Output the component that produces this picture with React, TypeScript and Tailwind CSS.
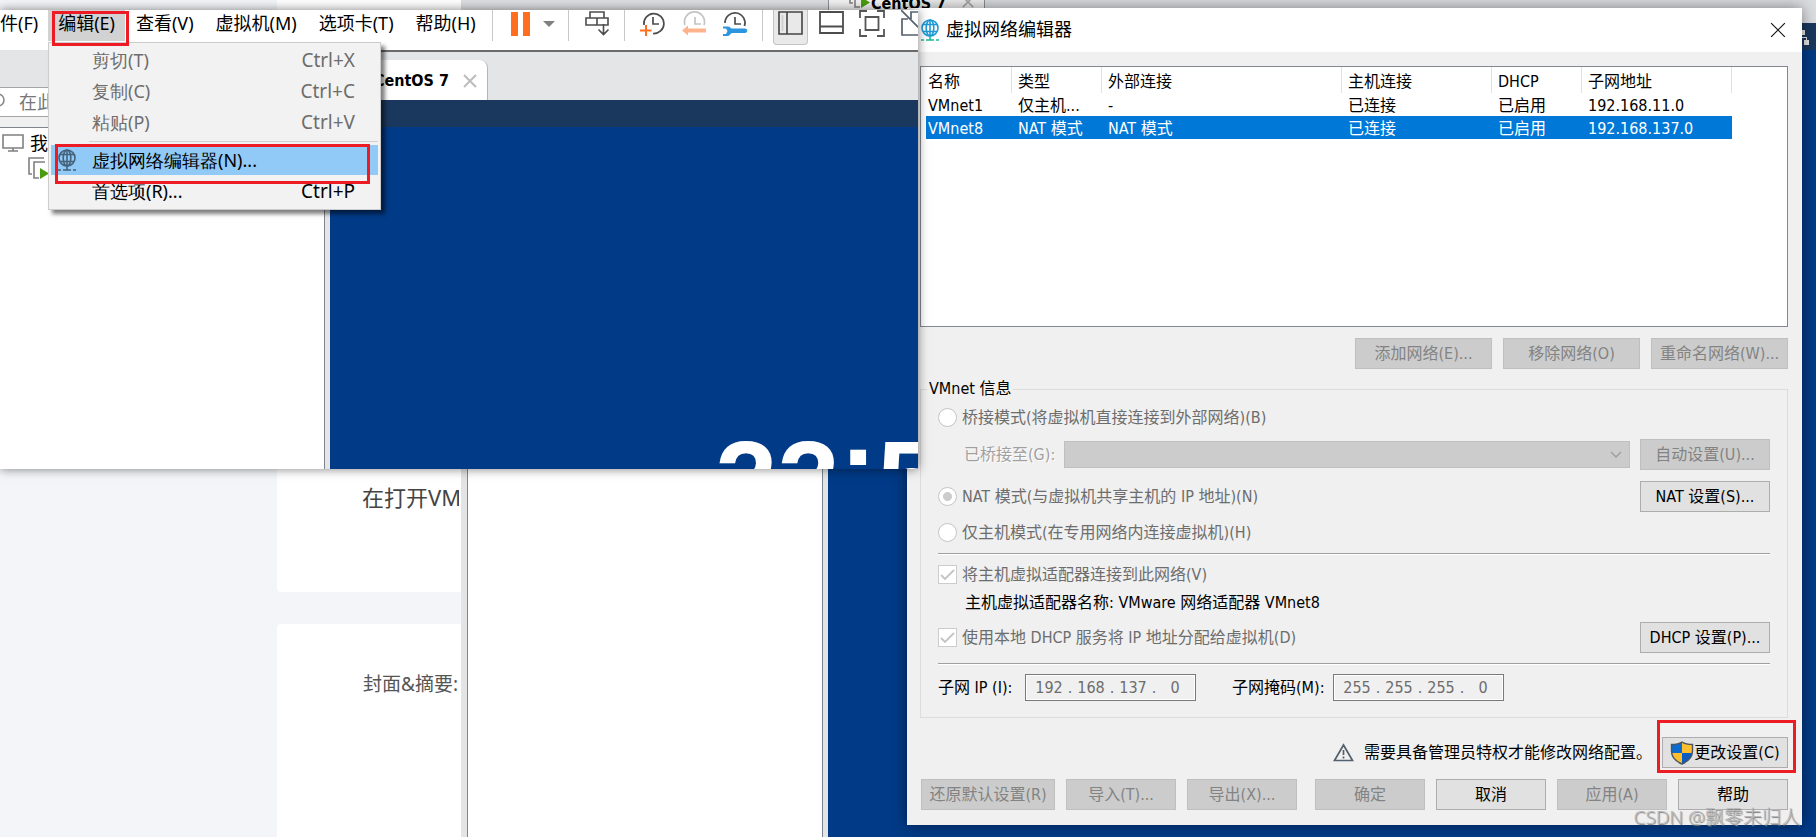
import type { ReactNode } from 'react'

const UI_FONT = "font-['DejaVu_Sans_Condensed','Noto_Sans_CJK_SC',sans-serif]"
const MENU_FONT = "font-['Noto_Sans','Noto_Sans_CJK_SC',sans-serif]"

const menus = ['文件(F)', '编辑(E)', '查看(V)', '虚拟机(M)', '选项卡(T)', '帮助(H)']

const networks = [
  { name: 'VMnet1', type: '仅主机...', external: '-', host: '已连接', dhcp: '已启用', subnet: '192.168.11.0' },
  { name: 'VMnet8', type: 'NAT 模式', external: 'NAT 模式', host: '已连接', dhcp: '已启用', subnet: '192.168.137.0' },
]

function Globe({ color, base }: { color: string; base: string }) {
  return (
    <svg width="20" height="23" viewBox="0 0 20 23" fill="none" stroke={color} strokeWidth="1.6" className="shrink-0">
      <circle cx="10" cy="9" r="8" />
      <ellipse cx="10" cy="9" rx="3.8" ry="8" />
      <path d="M2.8 5.5h14.4M2.8 12.5h14.4M10 1v16" />
      <path d="M10 17v4M6 21h8M1 21h3M16 21h3" stroke={base} />
    </svg>
  )
}

function Clock({ stroke, children }: { stroke: string; children: ReactNode }) {
  return (
    <svg width="26" height="26" viewBox="0 0 26 26" fill="none" stroke={stroke} strokeWidth="1.7">
      {children}
    </svg>
  )
}

function Cross({ size, stroke, width }: { size: number; stroke: string; width: number }) {
  return (
    <svg width={size} height={size} viewBox="0 0 14 14" stroke={stroke} strokeWidth={width}>
      <path d="M1 1l12 12M13 1L1 13" />
    </svg>
  )
}

function VmIcon() {
  return (
    <svg width="22" height="23" viewBox="0 0 22 23" fill="none" stroke="#808080" strokeWidth="1.6">
      <path d="M4 17H1V1h15M17 5H6v16h5" />
      <path d="M12 11l9 5.500l-9 5.500z" fill="#4a9b0c" stroke="none" />
    </svg>
  )
}

function Toolbar() {
  const line = 'h-[31px] w-px bg-[#c8c8c8]'
  return (
    <div className="flex shrink-0 items-start">
      <button aria-label="暂停" className="ml-[18px] mt-0.5 w-5">
        <svg width="20" height="24" fill="#ff6d1f">
          <path d="M0 0h7v24H0zM12 0h7v24h-7z" />
        </svg>
      </button>
      <button aria-label="电源选项" className="ml-3 mt-[11px] w-3">
        <svg width="12" height="7" fill="#808080">
          <path d="M0 0h12L6 6z" />
        </svg>
      </button>
      <span className={`ml-[13px] ${line}`} />
      <button aria-label="发送 Ctrl+Alt+Del" className="ml-4 w-6">
        <svg width="25" height="26" viewBox="0 0 25 26" fill="none" stroke="#4d4d4d" strokeWidth="1.6">
          <path d="M5 2h14v6H5zM1 8h11v7H1zM12 8h11v7H12zM18.500 14v10M13.500 19.500l5 5l5-5" />
        </svg>
      </button>
      <span className={`ml-[15px] ${line}`} />
      <button aria-label="拍摄快照" className="ml-[15px] w-6">
        <Clock stroke="#4d4d4d">
          <path d="M4 15A10 10 0 1 1 13 23.500M13 7v7h6" />
          <path d="M6 15v11M0 20.500h11.500" stroke="#ff6d1f" strokeWidth="2" />
        </Clock>
      </button>
      <button aria-label="恢复快照" className="ml-[18px] w-6">
        <Clock stroke="#c4c4c4">
          <path d="M3 15A10 10 0 1 1 22 15M13 7v7h6" />
          <path d="M0 20.500l6-5v3h18v4H6v3z" fill="#ffb38c" stroke="none" />
        </Clock>
      </button>
      <button aria-label="管理快照" className="ml-4 w-[26px]">
        <Clock stroke="#4d4d4d">
          <path d="M3 13A10 10 0 1 1 22.500 16M13 7v7h6" />
          <path
            d="M1 16.500h5c2 0 2.500 2 4 2h13c3 0 3 4.500 0 4.500H10c-1.500 0-2 3-4 3H1v-2h3l1.500-3L4 18.500H1z"
            fill="#2b96de"
            stroke="none"
          />
        </Clock>
      </button>
      <span className={`ml-3.5 ${line}`} />
      <button
        aria-label="显示库"
        className="ml-2.5 flex h-[35px] w-[35px] justify-center rounded-b border border-t-0 border-[#c4c4c4] bg-[#e9e9e9] pt-px"
      >
        <svg width="25" height="25" fill="none" stroke="#444" strokeWidth="1.6">
          <path d="M1 1h23v22H1zM9 1v22" />
          <path d="M4.500 4v16" stroke="#ccc" />
        </svg>
      </button>
      <button aria-label="显示缩略图" className="ml-[11px] mt-px w-[25px]">
        <svg width="25" height="25" fill="none" stroke="#4d4d4d" strokeWidth="1.8">
          <path d="M1 1h23v21H1zM1 15.500h23" />
        </svg>
      </button>
      <button aria-label="全屏" className="ml-3.5 w-7">
        <svg width="28" height="28" fill="none" stroke="#555" strokeWidth="1.8">
          <path d="M2 8V1h7M19 1h7v7M26 19v7h-7M9 26H2v-7M7.500 7h13v13h-13z" />
        </svg>
      </button>
      <button aria-label="Unity" className="ml-[15px] w-[26px]">
        <svg width="26" height="28" fill="none" stroke="#55626e" strokeWidth="1.7">
          <path d="M10 9V2h15M7 9H1v16h22V19M0 0l19 19" />
        </svg>
      </button>
    </div>
  )
}

function MenuItem({ label, keys, disabled }: { label: string; keys?: string; disabled?: boolean }) {
  return (
    <button
      role="menuitem"
      disabled={disabled}
      className="flex h-[31px] w-full items-center justify-between pl-[42px] pr-6 disabled:text-[#6d6d6d]"
    >
      <span>{label}</span>
      <span className="text-[19px]">{keys}</span>
    </button>
  )
}

function EditMenu() {
  return (
    <div
      role="menu"
      className="absolute left-12 top-8 h-[168px] w-[333px] border border-[#ccc] bg-[#f2f2f2] px-px pt-px text-lg leading-6 shadow-[4px_4px_4px_rgba(0,0,0,0.5)]"
    >
      <MenuItem label="剪切(T)" keys="Ctrl+X" disabled />
      <MenuItem label="复制(C)" keys="Ctrl+C" disabled />
      <MenuItem label="粘贴(P)" keys="Ctrl+V" disabled />
      <div className="mb-[3px] ml-[39px] mr-px mt-1 h-px bg-[#d0d0d0]" />
      <button role="menuitem" className="mx-px flex h-[30px] w-[327px] items-center gap-[15px] bg-[#91c9f7] pl-[6px]">
        <Globe color="#44627a" base="#44627a" />
        <span>虚拟网络编辑器(N)...</span>
      </button>
      <MenuItem label="首选项(R)..." keys="Ctrl+P" />
    </div>
  )
}

function VmwareWindow() {
  return (
    <section className="absolute left-0 top-2.5 h-[459px] w-[918px] shadow-[0_0_10px_rgba(0,0,0,0.5)]">
      <div className={`flex h-full flex-col overflow-hidden bg-white ${MENU_FONT}`}>
        <div className="flex h-10 shrink-0">
          <nav className="-ml-7 flex h-[31px] w-[521px] shrink-0 border-r border-[#c8c8c8] text-lg leading-[26px]">
            {menus.map((m, i) => (
              <button
                key={m}
                className={`shrink-0 whitespace-nowrap pb-1.5 ${i < 2 ? 'px-2.5' : 'px-[11px]'} ${
                  m === '编辑(E)' ? 'bg-[#d2d2d2]' : ''
                }`}
              >
                {m}
              </button>
            ))}
          </nav>
          <Toolbar />
        </div>
        <div className="flex min-h-0 flex-1">
          <aside className="flex w-[325px] shrink-0 flex-col border-r border-[#80858c]">
            <div className="h-[37px] bg-[#e4e5e7]" />
            <label className="flex h-[30px] items-center gap-3.5 border-y border-[#a5a5a5] text-lg text-[#777]">
              <svg width="5" height="18" fill="none" stroke="#888" strokeWidth="1.6">
                <circle cx="-2" cy="7" r="6" />
              </svg>
              <input className="w-40 outline-none placeholder:text-[#777]" placeholder="在此处键入内容" />
            </label>
            <div className="h-[11px] border-b border-[#80858c] bg-[#f0f0f0]" />
            <div className="flex items-center gap-1.5 pl-0.5 pt-0.5 text-lg leading-[26px]">
              <svg width="22" height="18" fill="none" stroke="#808080" strokeWidth="1.6">
                <path d="M1 1h20v13H1zM11 14v3M6 17h10" />
              </svg>
              我的计算机
            </div>
            <div className="pl-7 pt-px">
              <VmIcon />
            </div>
          </aside>
          <div className="w-[5px] shrink-0 bg-[#e4e5e7]" />
          <main className="flex min-w-0 flex-1 flex-col">
            <div className="-ml-[5px] flex h-[50px] shrink-0 items-end border-t-2 border-[#6b6b6b] bg-[#e4e5e7]">
              <button
                className={`flex h-10 w-[163px] items-center justify-end gap-3.5 rounded-tr-lg border-r border-[#b5b5b5] bg-white pr-2.5 pt-0.5 text-base font-bold ${UI_FONT}`}
              >
                CentOS 7
                <Cross size={14} stroke="#bdbdbd" width={2} />
              </button>
            </div>
            <div className="h-[27px] shrink-0 bg-[#1a385e]" />
            <div className="flex-1 overflow-hidden bg-[#013a86] pl-[385px] pt-[299px]">
              <div className="flex h-0 items-start whitespace-nowrap font-['Liberation_Sans',sans-serif] text-[112px] font-bold leading-[110px] text-white">
                <span>22</span>
                <span className="leading-[84px]">:</span>
                <span>57</span>
              </div>
            </div>
          </main>
        </div>
      </div>
      <EditMenu />
      <div className="pointer-events-none absolute left-[52px] top-px h-[35px] w-[77px] border-3 border-[#ed1c24]" />
      <div className="pointer-events-none absolute left-[55px] top-[134px] h-10 w-[315px] border-3 border-[#ed1c24]" />
    </section>
  )
}

function DialogButton({ children, width, disabled }: { children: ReactNode; width: string; disabled?: boolean }) {
  return (
    <button
      disabled={disabled}
      className={`flex h-[31px] shrink-0 items-center justify-center whitespace-nowrap border border-[#adadad] bg-[#e1e1e1] pt-px disabled:border-[#bfbfbf] disabled:bg-[#ccc] disabled:text-[#838383] ${width}`}
    >
      {children}
    </button>
  )
}

function RadioRow({ label, checked }: { label: string; checked?: boolean }) {
  return (
    <label className="flex items-center gap-[5px] text-[#6d6d6d]">
      <input
        type="radio"
        name="mode"
        disabled
        defaultChecked={checked}
        className="h-[19px] w-[19px] appearance-none rounded-full border border-[#c4c4c4] bg-white checked:bg-[radial-gradient(circle,#ccc_4px,#fff_5px)]"
      />
      {label}
    </label>
  )
}

function CheckRow({ label }: { label: string }) {
  return (
    <label className="flex items-center gap-[5px] text-[#6d6d6d]">
      <span className="grid h-[19px] w-[19px] place-items-center">
        <input
          type="checkbox"
          disabled
          defaultChecked
          className="col-start-1 row-start-1 h-[19px] w-[19px] appearance-none border border-[#ccc] bg-white"
        />
        <svg width="15" height="12" fill="none" stroke="#c4c4c4" strokeWidth="1.8" className="col-start-1 row-start-1">
          <path d="M1 6l4 4l9-9" />
        </svg>
      </span>
      {label}
    </label>
  )
}

function IpField({ label, parts }: { label: string; parts: string[] }) {
  return (
    <div
      role="group"
      aria-label={label}
      className="flex h-[27px] w-[171px] items-center border border-[#7a7a7a] pl-1.5 text-[#6d6d6d] shadow-[inset_0_0_0_1px_#fff]"
    >
      {parts.map((p, i) => (
        <span key={i} className="flex">
          {i > 0 && <span className="w-2 text-center">.</span>}
          <input aria-label={`${label} ${i + 1}`} disabled defaultValue={p} className="w-[34px] text-center" />
        </span>
      ))}
    </div>
  )
}

function Divider() {
  return <hr className="h-0.5 border-t border-b border-t-[#a0a0a0] border-b-white" />
}

function NetworkTable() {
  const head = 'h-[26px] border-r border-[#e0e0e0] pl-[6px] pt-[3px] text-left font-normal'
  const cell = 'pl-[6px] pt-0.5'
  return (
    <div className="h-[261px] border border-[#828790] bg-white pl-[5px]">
      <table className="w-[806px] table-fixed border-separate border-spacing-0 leading-5">
        <thead>
          <tr>
            <th className="h-[26px] w-[86px] border-r border-[#e0e0e0] pl-0.5 pt-[3px] text-left font-normal">名称</th>
            <th className={`w-[90px] ${head}`}>类型</th>
            <th className={`w-[240px] ${head}`}>外部连接</th>
            <th className={`w-[150px] ${head}`}>主机连接</th>
            <th className={`w-[90px] ${head}`}>DHCP</th>
            <th className={`w-[150px] ${head}`}>子网地址</th>
          </tr>
        </thead>
        <tbody>
          {networks.map(n => (
            <tr key={n.name} className={n.name === 'VMnet8' ? 'bg-[#0078d7] text-white' : ''}>
              <td className="h-[23px] pl-0.5 pt-0.5">{n.name}</td>
              <td className={`whitespace-nowrap ${cell}`}>{n.type}</td>
              <td className={cell}>{n.external}</td>
              <td className={cell}>{n.host}</td>
              <td className={cell}>{n.dhcp}</td>
              <td className={cell}>{n.subnet}</td>
            </tr>
          ))}
        </tbody>
      </table>
    </div>
  )
}

function NetworkEditor() {
  return (
    <section
      role="dialog"
      aria-label="虚拟网络编辑器"
      className={`absolute left-[907px] right-3.5 top-2 bg-[#f0f0f0] text-base leading-[18px] shadow-[0_0_14px_rgba(0,0,0,0.45)] ${UI_FONT}`}
    >
      <header className="flex h-11 items-center bg-white pl-[13px] pr-4">
        <Globe color="#1f9ad6" base="#1abc9c" />
        <h1 className={`ml-1.5 flex-1 pb-0.5 text-lg leading-6 ${MENU_FONT}`}>虚拟网络编辑器</h1>
        <button aria-label="关闭">
          <Cross size={16} stroke="#111" width={1} />
        </button>
      </header>

      <div className="pb-[15px] pl-[13px] pr-3.5 pt-3.5">
        <NetworkTable />

        <div className="mt-[11px] flex justify-end gap-[11px]">
          <DialogButton width="w-[137px]" disabled>添加网络(E)...</DialogButton>
          <DialogButton width="w-[137px]" disabled>移除网络(O)</DialogButton>
          <DialogButton width="w-[137px]" disabled>重命名网络(W)...</DialogButton>
        </div>

        <fieldset className="mt-[11px] border border-[#dcdcdc] px-[17px] pb-4">
          <legend className="-ml-[11px] px-0.5">VMnet 信息</legend>
          <div className="mt-1 flex h-[31px] items-center">
            <RadioRow label="桥接模式(将虚拟机直接连接到外部网络)(B)" />
          </div>
          <div className="mt-1.5 flex h-[31px] items-center">
            <label
              htmlFor="bridge"
              className="ml-[26px] w-[100px] shrink-0 whitespace-nowrap text-[#a0a0a0] [text-shadow:1px_1px_0_#fff]"
            >
              已桥接至(G):
            </label>
            <div className="grid min-w-0 flex-1 items-center">
              <select
                id="bridge"
                disabled
                className="col-start-1 row-start-1 h-[27px] w-full appearance-none border border-[#bfbfbf] bg-[#ccc]"
              />
              <svg width="12" height="7" fill="none" stroke="#a0a0a0" strokeWidth="1.5" className="col-start-1 row-start-1 mr-2 justify-self-end">
                <path d="M1 1l5 5l5-5" />
              </svg>
            </div>
            <span className="w-2.5" />
            <DialogButton width="w-[130px]" disabled>自动设置(U)...</DialogButton>
          </div>
          <div className="mt-[11px] flex h-[31px] items-center justify-between">
            <RadioRow label="NAT 模式(与虚拟机共享主机的 IP 地址)(N)" checked />
            <DialogButton width="w-[130px]">NAT 设置(S)...</DialogButton>
          </div>
          <div className="my-[5px] flex h-[31px] items-center">
            <RadioRow label="仅主机模式(在专用网络内连接虚拟机)(H)" />
          </div>
          <Divider />
          <div className="mt-1 flex h-[31px] items-center">
            <CheckRow label="将主机虚拟适配器连接到此网络(V)" />
          </div>
          <p className="ml-[27px] leading-[26px]">主机虚拟适配器名称: VMware 网络适配器 VMnet8</p>
          <div className="mb-2.5 mt-1.5 flex h-[31px] items-center justify-between">
            <CheckRow label="使用本地 DHCP 服务将 IP 地址分配给虚拟机(D)" />
            <DialogButton width="w-[130px]">DHCP 设置(P)...</DialogButton>
          </div>
          <Divider />
          <div className="mt-[9px] flex items-center">
            <span className="w-[87px] whitespace-nowrap">子网 IP (I):</span>
            <IpField label="子网 IP" parts={['192', '168', '137', '0']} />
            <span className="ml-9 w-[101px] whitespace-nowrap">子网掩码(M):</span>
            <IpField label="子网掩码" parts={['255', '255', '255', '0']} />
          </div>
        </fieldset>

        <div className="mt-[19px] flex h-[31px] items-center justify-end">
          <svg width="21" height="19" fill="none" stroke="#53616e" strokeWidth="1.7">
            <path d="M10.500 2L19.500 17.500H1.500zM10.500 7v5M10.500 13.500v2" />
          </svg>
          <p className="mx-2.5 whitespace-nowrap">需要具备管理员特权才能修改网络配置。</p>
          <div className="relative">
            <DialogButton width="w-[126px]">
              <svg width="24" height="24" viewBox="0 0 24 24">
                <path d="M12 1C9 3 5 3.500 1.500 3.500V10c0 6 4.500 10.500 10.500 13z" fill="#0a6cd0" />
                <path d="M12 1c3 2 7 2.500 10.500 2.500V10c0 6-4.500 10.500-10.500 13z" fill="#ffbe2e" />
                <path d="M1.600 12H12v11C6.500 20.500 2.500 17 1.600 12z" fill="#ffbe2e" />
                <path d="M22.400 12H12v11c5.500-2.500 9.500-6 10.400-11z" fill="#0a5cc0" />
                <path
                  d="M12 1C9 3 5 3.500 1.500 3.500V10c0 6 4.500 10.500 10.500 13c6-2.500 10.500-7 10.500-13V3.500C19 3.500 15 3 12 1z"
                  fill="none"
                  stroke="#4b5560"
                  strokeWidth="1.400"
                />
              </svg>
              更改设置(C)
            </DialogButton>
            <div className="pointer-events-none absolute -bottom-[5px] -left-[5px] -right-2 -top-[17px] border-3 border-[#ed1c24]" />
          </div>
        </div>

        <footer className="mt-[11px] flex justify-between pl-px">
          <div className="flex gap-[11px]">
            <DialogButton width="w-[134px]" disabled>还原默认设置(R)</DialogButton>
            <DialogButton width="w-[110px]" disabled>导入(T)...</DialogButton>
            <DialogButton width="w-[110px]" disabled>导出(X)...</DialogButton>
          </div>
          <div className="flex gap-[11px]">
            <DialogButton width="w-[110px]" disabled>确定</DialogButton>
            <DialogButton width="w-[110px]">取消</DialogButton>
            <DialogButton width="w-[110px]" disabled>应用(A)</DialogButton>
            <DialogButton width="w-[110px]">帮助</DialogButton>
          </div>
        </footer>
      </div>
    </section>
  )
}

// article editor in the browser, mostly hidden by the windows above it
function ArticlePage() {
  return (
    <div className={`flex w-[461px] shrink-0 flex-col gap-8 bg-[#f4f5f8] pl-[277px] ${MENU_FONT}`}>
      <div className="flex h-[592px] shrink-0 items-end overflow-hidden rounded-bl bg-white pb-[81px] pl-[85px] pr-0.5">
        <p className="w-full overflow-hidden whitespace-nowrap text-[22px] leading-7 text-[#444]">在打开VMware</p>
      </div>
      <div className="min-h-0 flex-1 overflow-hidden rounded-tl bg-white pl-[86px] pt-[46px]">
        <p className="whitespace-nowrap text-[19px] leading-7 text-[#555]">封面&amp;摘要:</p>
      </div>
    </div>
  )
}

function BackWindow() {
  return (
    <div className="flex min-w-0 flex-1 flex-col">
      <div className="flex h-[23px] shrink-0 items-start bg-[#dcdde0] pl-[367px]">
        <div className={`flex h-full w-[157px] items-start border-x border-[#8c8f94] bg-[#f0f0f0] pl-5 ${UI_FONT}`}>
          <span className="-mt-3.5">
            <VmIcon />
          </span>
          <span className="-mt-1.5 whitespace-nowrap text-base font-bold leading-5">CentOS 7</span>
          <span className="-mt-1 ml-4">
            <Cross size={12} stroke="#aaa" width={2} />
          </span>
        </div>
      </div>
      <div className="flex min-h-0 flex-1">
        <div className="w-1.5 bg-[#e3e4e6]" />
        <div className="w-[356px] border-x border-[#7f8590] bg-white" />
        <div className="w-[5px] bg-[#e3e4e6]" />
        <div className="flex-1 bg-[#013a86]">
          <div className="flex h-[27px] items-center justify-end bg-[#1a385e] pr-[7px]">
            <svg width="14" height="16" fill="#e6e6e6">
              <path d="M5 1h5v5H5zM9 11h5v5H9zM0 11h5v5H0zM2 8h10v3h-1V9H3v2H2z" />
            </svg>
          </div>
        </div>
      </div>
    </div>
  )
}

export default function App() {
  return (
    <div className="relative flex h-screen w-full overflow-hidden text-black">
      <ArticlePage />
      <BackWindow />
      <NetworkEditor />
      <VmwareWindow />
      <p
        className={`absolute bottom-1 right-4 whitespace-nowrap text-[19px] font-light leading-8 text-[#b8b8b8] [text-shadow:1px_1px_1px_#777] ${MENU_FONT}`}
      >
        CSDN @飘零未归人
      </p>
    </div>
  )
}
